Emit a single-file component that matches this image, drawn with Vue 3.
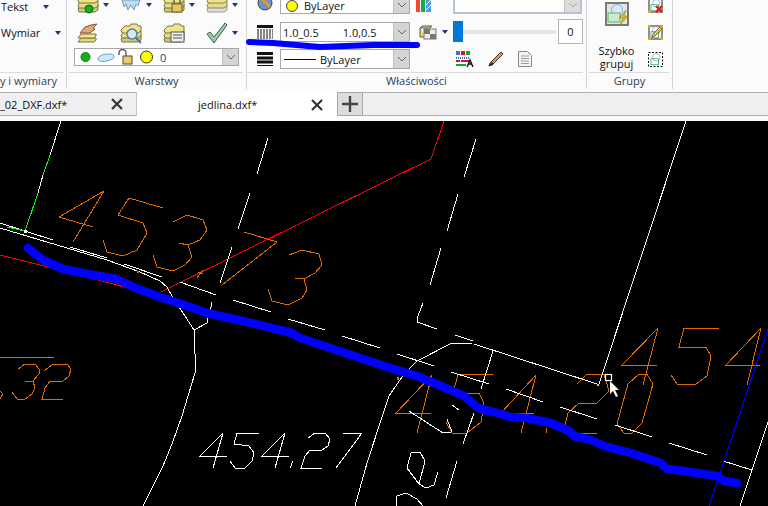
<script setup>
const white = [
  '61,121 50,155','43,175 38,193',
  '0,223 53,240','70,247 107,258','124,264 162,277','180,282 216,295','233,300 271,312',
  '288,319 325,330','342,336 380,348','397,354 434,366','451,372 489,384','506,389 543,402',
  '560,407 597,419','615,425 652,437','669,443 707,455','723,461 752,470',
  '0,228 67,248 107,260 140,272 160,281 167,287 173,298 185,316 194,330 195,354 195,373 182,416 172,444 163,466 143,506',
  '194,330 207,323 208,318','212,302 210,313',
  '268,138 257,174','250,193 238,229','232,247 220,283',
  '476,139 464,177','458,194 447,231','441,248 430,285','423,303 418,316 417,322 437,329',
  '455,335 473,341','474,344 597,384',
  '686,121 599,384',
  '472,343 452,343 417,361 404,374 389,396 384,411 367,463 355,506',
  '493,351 481,389','474,413 463,444','452,405 459,410',
  '409,411 443,433 451,432','447,419 452,432',
  '768,422 740,506',
  '223,433 200,456 227,456','223,433 213,468',
  '259,433 237,433 234,444 249,446 254,453 252,461 245,468 235,468 230,461',
  '285,433 262,456 289,456','285,433 275,468',
  '293,461 290,468',
  '308,438 315,433 325,433 330,439 328,446 322,450 310,450 305,456 301,468 322,468',
  '343,433 362,433 336,468',
  '411,453 420,452 425,461 419,484 407,468 411,453','419,484 426,488 434,485 438,472',
  '457,461 446,498',
  '396,506 397,496 406,493 417,499 423,506'
]
const green = ['50,155 43,175','38,193 25,231','7,227 25,231']
const red = [
  '0,255 60,270 147,293',
  '161,292 384,182 431,159 444,121'
]
const orange = [
  '104,191 59,217 93,227','104,191 73,242',
  '163,208 129,198 118,215 143,223 147,233 137,250 123,256 107,252 103,240',
  '173,222 187,215 203,220 207,230 200,240 188,245 179,243','188,245 192,257 185,265 173,271 157,267 153,255',
  '244,232 277,242 222,285','203,270 197,278','198,272 203,274',
  '289,255 302,250 319,254 322,265 315,273 304,279 295,278','304,279 307,290 302,298 288,305 272,301 268,289',
  '0,357 54,357',
  '18,369 25,364 35,364 39,369 39,374 33,381','25,381 33,381 35,388 32,394 25,399 17,399 12,392',
  '44,371 53,364 67,364 71,369 69,376 63,381 50,381 45,388 42,399 63,399',
  '0,391 3,394 0,399',
  '432,375 396,413 431,413','432,375 417,433',
  '493,374 458,374 453,393 479,393 484,403 481,422 467,433 452,433 446,422',
  '536,375 501,413 534,413','536,375 521,433','547,428 546,433',
  '577,384 587,374 604,374 609,391 597,403 579,403 568,413 564,429 564,433 597,433',
  '639,374 647,374 653,384 642,423 632,433 624,433 617,424 628,384 639,374',
  '658,328 622,365 657,365','658,328 643,385',
  '719,328 684,328 679,347 706,347 711,356 707,376 696,384 677,384 671,375',
  '761,328 726,365 760,365','761,328 747,385'
]
const scrawl = '28,248 43,260 63,269 93,275 117,279 133,287 160,297 193,308 207,313 247,322 292,333 300,338 384,366 417,376 441,386 464,396 477,407 484,410 494,412 511,417 527,418 551,423 569,431 574,436 591,440 604,446 631,453 661,463 667,469 684,471 717,476 724,481 737,483'
</script>

<template>
  <div class="page">
    <div class="ribbon">
      <svg class="defs" width="0" height="0">
        <defs>
          <symbol id="stack" viewBox="0 0 22 22">
            <path d="M1 17l4-4h16v5l-3 2H2z" fill="#cfc77a" stroke="#7a7440"/>
            <path d="M1 13l4-4h16v5l-3 2H2z" fill="#e3dc8e" stroke="#7a7440"/>
            <path d="M1 8l4-4h5l1-2h6l1 2h3v5l-3 2H2z" fill="#efe48a" stroke="#7a7440"/>
          </symbol>
          <symbol id="groupbox" viewBox="0 0 20 20">
            <circle cx="11" cy="7" r="5" fill="none" stroke="#7fa5dc"/>
            <rect x="4" y="9" width="10" height="8" fill="none" stroke="#2aa34a"/>
          </symbol>
        </defs>
      </svg>

      <section class="group g1">
        <div class="body col1">
          <div class="textrow"><span>Tekst</span><i class="tri"></i></div>
          <div class="textrow"><span>Wymiar</span><i class="tri"></i></div>
        </div>
        <div class="label clip"><span>sy i wymiary</span></div>
      </section>

      <section class="group g2">
        <div class="body">
          <div class="layers">
            <div class="cell">
              <svg class="ic" viewBox="0 0 22 22"><use href="#stack"/><circle cx="12" cy="17" r="4" fill="#16b01e" stroke="#0a6a10"/></svg><i class="tri"></i>
            </div>
            <div class="cell">
              <svg class="ic" viewBox="0 0 22 22"><path d="M2 8h18l-2 6-2-2-2 6-3-5-3 5-2-6-2 3z" fill="#bcdcf2" stroke="#7a9cb8"/></svg><i class="tri"></i>
            </div>
            <div class="cell">
              <svg class="ic" viewBox="0 0 22 22"><use href="#stack"/><rect x="9" y="12" width="10" height="8" fill="#e8c65c" stroke="#6a5a20"/><path d="M11 12V9a3 3 0 0 1 6 0v3" fill="none" stroke="#666" stroke-width="1.5"/></svg><i class="tri"></i>
            </div>
            <div class="cell">
              <svg class="ic" viewBox="0 0 22 22"><path d="M1 17l4-4h16v5l-3 2H2z" fill="#ddd" stroke="#999"/><path d="M1 13l4-4h16v5l-3 2H2z" fill="#e3dc8e" stroke="#8a8450"/><path d="M1 8l4-4h16v5l-3 2H2z" fill="#efe48a" stroke="#8a8450"/></svg><i class="tri"></i>
            </div>
            <div class="cell">
              <svg class="ic" viewBox="0 0 22 22"><path d="M1 20l3-4h15v2l-2 2z" fill="#e3d77e" stroke="#7a7440"/><path d="M1 16l3-4h15v2l-2 2z" fill="#efe48a" stroke="#7a7440"/><path d="M3 11l5-6 6-2 6-1-4 4 2 1-5 4H7z" fill="#dba884" stroke="#8a5030"/></svg>
            </div>
            <div class="cell">
              <svg class="ic" viewBox="0 0 22 22"><use href="#stack"/><circle cx="12" cy="12" r="5" fill="#d6e8f2" stroke="#5a7f9c" stroke-width="1.5"/><path d="M16 16l5 5" stroke="#3f78b0" stroke-width="2"/></svg>
            </div>
            <div class="cell">
              <svg class="ic" viewBox="0 0 22 22"><use href="#stack"/><rect x="8" y="10" width="13" height="10" fill="#eee" stroke="#555"/><path d="M10 13h9M10 16h9" stroke="#555"/></svg>
            </div>
            <div class="cell">
              <svg class="ic" viewBox="0 0 22 22"><path d="M1 12l3-2 4 5L19 1l2 2L8 21z" fill="#8fcfa0" stroke="#4a5a50"/></svg><i class="tri"></i>
            </div>
            <div class="layercombo">
              <svg class="lc-ic" width="85" height="16" viewBox="0 1 85 16">
                <circle cx="10.5" cy="9" r="4.5" fill="#12b018" stroke="#0a7a10"/>
                <path d="M23 10c2-3 6-4 12-4 3 0 4 1 4 3 0 2-3 3-8 4-5 1-9 0-8-3z" fill="#cfe6f7" stroke="#5ba3d8"/>
                <rect x="48" y="8" width="9" height="8" fill="#e8cc72" stroke="#5a4c20"/>
                <path d="M44 7V5a3 3 0 0 1 7 0v3" fill="none" stroke="#555" stroke-width="1.4"/>
                <circle cx="71.5" cy="9" r="6" fill="#ffff00" stroke="#333"/>
              </svg>
              <span class="zero">0</span>
              <span class="btn small"><svg width="10" height="6" viewBox="0 0 10 6"><path d="M1 1l4 4 4-4" fill="none" stroke="#666"/></svg></span>
            </div>
          </div>
        </div>
        <div class="label">Warstwy</div>
      </section>

      <section class="group g3">
        <div class="body bodyp">
          <div class="props">
            <div class="pi">
              <svg class="ic sm" viewBox="0 0 16 14"><circle cx="8" cy="5" r="7" fill="#6f90c8" stroke="#444"/><path d="M4 0l9 9" stroke="#d8a030" stroke-width="3"/></svg>
            </div>
            <div class="combo first"><span class="dot"></span><span class="t1">ByLayer</span><span class="btn"><svg width="10" height="6" viewBox="0 0 10 6"><path d="M1 1l4 4 4-4" fill="none" stroke="#666"/></svg></span></div>
            <div class="pc">
              <svg width="15" height="14" viewBox="0 0 15 14"><rect width="4" height="14" fill="#ee4a30"/><rect x="5" width="4" height="14" fill="#18a850"/><rect x="10" width="5" height="14" fill="#4d9ce8"/><path d="M10 12l5-5M10 7l5-5" stroke="#fff"/></svg>
            </div>
            <div class="combo first dis"><span class="btn dis"><svg width="10" height="6" viewBox="0 0 10 6"><path d="M1 1l4 4 4-4" fill="none" stroke="#aaa"/></svg></span></div>

            <div class="pi">
              <svg class="ic sm" viewBox="0 0 16 14"><rect width="16" height="3" fill="#111"/><path d="M0 5h16M0 7h16M0 9h16M0 11h16M0 13h16" stroke="#111" stroke-dasharray="2 1"/></svg>
            </div>
            <div class="combo low"><span class="t2">1.0_0.5</span><span class="t3">1.0,0.5</span><span class="btn"><svg width="10" height="6" viewBox="0 0 10 6"><path d="M1 1l4 4 4-4" fill="none" stroke="#666"/></svg></span></div>
            <div class="pc c2">
              <svg width="18" height="16" viewBox="0 0 18 16"><path d="M1 4h10l2-2H3zM1 4v9h6" fill="#f2e26a" stroke="#555"/><rect x="5" y="5" width="12" height="10" fill="#eee" stroke="#777"/><rect x="5" y="5" width="6" height="5" fill="#777"/><rect x="11" y="10" width="6" height="5" fill="#777"/></svg>
              <i class="tri"></i>
            </div>
            <div class="slider">
              <span class="thumb"></span><span class="track"></span>
              <span class="spin">0</span>
            </div>

            <div class="pi">
              <svg class="ic sm" viewBox="0 0 16 14"><path d="M0 1.5h16M0 6h16M0 10h16" stroke="#111" stroke-width="3"/><path d="M0 13.5h16" stroke="#111"/></svg>
            </div>
            <div class="combo"><span class="line"></span><span class="t1">ByLayer</span><span class="btn"><svg width="10" height="6" viewBox="0 0 10 6"><path d="M1 1l4 4 4-4" fill="none" stroke="#666"/></svg></span></div>
            <div></div>
            <div class="picons">
              <svg width="18" height="16" viewBox="0 0 18 16"><rect width="4" height="4" fill="#4a6ed0"/><rect x="5" width="4" height="4" fill="#d81818"/><rect x="10" width="4" height="4" fill="#18a040"/><path d="M0 7h13" stroke="#4a6ed0" stroke-dasharray="1 1" stroke-width="2"/><path d="M0 10h4" stroke="#d81818" stroke-width="2"/><path d="M5 10h8" stroke="#d81818" stroke-width="2"/><path d="M0 14h10" stroke="#18a040" stroke-width="2"/><path d="M11 16l3-7 3 7M12 13h4" fill="none" stroke="#111" stroke-width="1.4"/></svg>
              <svg width="16" height="16" viewBox="0 0 16 16"><path d="M1 15l3-1L15 3l-2-2L2 12z" fill="#e0a040" stroke="#333"/><path d="M1 15l3-4 2 2z" fill="#222"/></svg>
              <svg width="14" height="16" viewBox="0 0 14 16"><path d="M.5.5h9l4 4v11H.5z" fill="#f4f4f4" stroke="#888"/><path d="M3 5h8M3 7.5h8M3 10h8M3 12.5h8" stroke="#999"/></svg>
            </div>
          </div>
        </div>
        <div class="label">Właściwości</div>
      </section>

      <section class="group g4">
        <div class="body grupy">
          <div class="bigcol">
            <svg width="24" height="24" viewBox="0 0 24 24">
              <rect x="1" y="1" width="22" height="22" fill="#dfe6e8" stroke="#7a7a70" stroke-width="2"/>
              <circle cx="12" cy="8" r="5.5" fill="#dce8f8" stroke="#86aee0"/>
              <rect x="3" y="11" width="12" height="9" fill="#cfe8cf" stroke="#5cb56c"/>
              <path d="M21 8l-7 8h4l-3 7 8-9h-4z" fill="#d8b820" stroke="#8a7010" stroke-width=".5"/>
            </svg>
            <div class="bigtext">Szybko<br>grupuj</div>
          </div>
          <div class="smallcol">
            <svg width="15" height="15" viewBox="0 0 15 15"><rect x="1" y="1" width="13" height="13" fill="#fff" stroke="#222"/><use href="#groupbox" width="15" height="15"/><path d="M8 8l6 6M14 8l-6 6" stroke="#e01818" stroke-width="2.2"/><circle cx="1.5" cy="13.5" r="1.5" fill="#e0a818"/></svg>
            <svg width="15" height="15" viewBox="0 0 15 15"><rect x="1" y="1" width="13" height="13" fill="#fff" stroke="#222"/><use href="#groupbox" width="15" height="15"/><path d="M4 12l1-3 7-7 2 2-7 7z" fill="#e8c030" stroke="#444" stroke-width=".7"/><circle cx="1.5" cy="1.5" r="1.5" fill="#e0a818"/><circle cx="13.5" cy="1.5" r="1.5" fill="#e0a818"/><circle cx="1.5" cy="13.5" r="1.5" fill="#e0a818"/><circle cx="13.5" cy="13.5" r="1.5" fill="#e0a818"/></svg>
            <svg width="15" height="15" viewBox="0 0 15 15"><rect x=".5" y=".5" width="14" height="14" fill="#fff" stroke="#111" stroke-dasharray="2 1.5"/><use href="#groupbox" width="15" height="15"/></svg>
          </div>
        </div>
        <div class="label">Grupy</div>
      </section>

      <svg class="marker" width="430" height="60" viewBox="0 0 430 60">
        <polyline points="249,42 273,43 320,47 373,45 417,45" fill="none" stroke="#0000ff" stroke-width="6" stroke-linecap="round" stroke-linejoin="round"/>
      </svg>
    </div>

    <div class="tabs">
      <div class="tab off"><span class="tabname">_02_DXF.dxf*</span>
        <svg class="close" width="12" height="12" viewBox="0 0 12 12"><path d="M1 1l10 10M11 1L1 11" stroke="#333" stroke-width="2.2"/></svg>
      </div>
      <div class="tab on"><span class="tabname n2">jedlina.dxf*</span>
        <svg class="close c2x" width="12" height="12" viewBox="0 0 12 12"><path d="M1 1l10 10M11 1L1 11" stroke="#333" stroke-width="2.2"/></svg>
      </div>
      <div class="plus"><svg width="16" height="16" viewBox="0 0 16 16"><path d="M8 0v16M0 8h16" stroke="#444" stroke-width="2.4"/></svg></div>
      <div class="rest"></div>
    </div>

    <svg class="canvas" width="768" height="385" viewBox="0 121 768 385">
      <g fill="none" stroke-width="1" shape-rendering="crispEdges">
        <polyline v-for="(p, i) in red" :key="'r' + i" :points="p" stroke="#ff0000"/>
        <polyline v-for="(p, i) in orange" :key="'o' + i" :points="p" stroke="#e06c00"/>
        <polyline v-for="(p, i) in white" :key="'w' + i" :points="p" stroke="#ffffff"/>
        <polyline v-for="(p, i) in green" :key="'g' + i" :points="p" stroke="#00ff00"/>
        <polyline points="768,329 709,506" stroke="#0000ff"/>
      </g>
      <rect x="24" y="230" width="3" height="3" fill="#fff"/>
      <rect x="137" y="271" width="2" height="2" fill="#e06c00"/>
      <rect x="397" y="377" width="2" height="3" fill="#e06c00"/>
      <rect x="597" y="384" width="2" height="2" fill="#e8c090"/>
      <polyline :points="scrawl" fill="none" stroke="#0000ff" stroke-width="8.5" stroke-linecap="round" stroke-linejoin="round"/>
      <rect x="605.5" y="374.5" width="6" height="6" fill="#000" stroke="#fff" stroke-width="1.2"/>
      <path d="M610 381l0 13 3-3 3 6 2-1-3-6 4 0z" fill="#fff"/>
    </svg>
  </div>
</template>

<style>
html, body { margin: 0; background: #000; overflow: hidden; }
</style>

<style scoped>
.page { width: 768px; height: 506px; display: flex; flex-direction: column; overflow: hidden; font-family: "Open Sans", "Noto Sans", sans-serif; font-size: 11px; color: #111; }
.ribbon { position: relative; flex: none; height: 92px; box-sizing: border-box; padding-bottom: 3px; background: #fbfbfb; display: flex; overflow: hidden; }
.defs { position: absolute; }
.group { flex: none; box-sizing: border-box; border-right: 1px solid #d6d6d6; display: flex; flex-direction: column; height: 89px; }
.g1 { width: 67px; }
.g2 { width: 180px; }
.g3 { width: 340px; }
.g4 { width: 86px; }
.body { height: 73px; box-sizing: border-box; overflow: hidden; flex: none; border-bottom: 1px solid #dcdcdc; margin: 0 3px 0 2px; }
.label { height: 16px; line-height: 16px; text-align: center; color: #2e3d4e; white-space: nowrap; overflow: hidden; }
.clip { display: flex; justify-content: flex-end; padding-right: 9px; }
.clip span { flex: none; }
.g1 .body { margin-left: 0; }
.tri { flex: none; display: block; width: 0; height: 0; border-left: 3.5px solid transparent; border-right: 3.5px solid transparent; border-top: 4px solid #1d3a70; }

.col1 > .textrow { height: 27px; box-sizing: border-box; display: flex; align-items: center; padding-left: 1px; }
.col1 > .textrow:first-child { margin-top: -8px; padding-top: 2px; }
.textrow .tri { margin-left: 15px; }

.layers { display: grid; grid-template-columns: repeat(4, 43px); grid-template-rows: 26px 26px 18px; row-gap: 2px; padding-left: 8px; margin-top: -8px; }
.cell { display: flex; align-items: center; height: 26px; }
.cell:nth-child(-n+4) .ic { align-self: flex-start; }
.cell .tri { margin-left: 4px; }
.ic { width: 22px; height: 22px; flex: none; }
.ic.sm { width: 16px; height: 14px; }
.layercombo { grid-column: 1 / -1; margin: 0 10px 0 -3px; height: 18px; box-sizing: border-box; border: 1px solid #a8a8a8; background: #fff; display: flex; align-items: center; }
.lc-ic { flex: none; }
.zero { color: #123a8a; }
.btn { margin-left: auto; flex: none; width: 16px; height: 100%; background: #d4d4d4; display: flex; align-items: center; justify-content: center; border-left: 1px solid #c0c0c0; box-sizing: border-box; }
.btn.dis { background: #dcdcdc; }

.bodyp { margin: 0 3px 0 0; }
.props { display: grid; grid-template-columns: 33px 130px 43px 130px; grid-template-rows: 19px 21px 20px; row-gap: 7px; margin-top: -5px; align-items: center; }
.pi { display: flex; justify-content: center; padding-left: 3px; }
.pc { display: flex; align-items: center; padding-left: 6px; }
.pc.c2 { padding-left: 9px; gap: 5px; }
.combo { height: 20px; box-sizing: border-box; border: 1px solid #a8a8a8; background: #fff; display: flex; align-items: center; }
.combo.first { height: 19px; }
.first .t1, .first .dot { margin-top: 2px; }
.combo.low { align-self: end; }
.combo.dis { background: #fdfdfd; border: 2px solid #b8c4d0; width: 129px; }
.dot { width: 10px; height: 10px; border-radius: 50%; background: #ffff00; border: 1px solid #444; margin-left: 5px; }
.t1 { margin-left: 6px; }
.t2 { margin-left: 2px; }
.t3 { margin-left: 24px; }
.line { width: 32px; height: 1px; background: #111; margin-left: 3px; }
.line + .t1 { margin-left: 4px; }
.slider { display: flex; align-items: center; height: 25px; }
.thumb { width: 10px; height: 21px; background: #0078d7; flex: none; }
.track { width: 93px; height: 4px; background: #e2e6e2; flex: none; }
.spin { flex: none; width: 25px; height: 25px; box-sizing: border-box; margin-left: 2px; border: 1px solid #b4b4b4; background: #fff; display: flex; align-items: center; justify-content: center; }
.picons { display: flex; align-items: center; gap: 14px; padding-left: 3px; }

.grupy { display: flex; margin-right: 3px; }
.bigcol { width: 55px; display: flex; flex-direction: column; align-items: center; padding-top: 2px; }
.bigtext { margin-top: 18px; text-align: center; line-height: 13px; }
.smallcol { width: 20px; margin-left: 1px; display: flex; flex-direction: column; align-items: center; gap: 12px; margin-top: -2px; }

.marker { position: absolute; left: 0; top: 0; pointer-events: none; }

.tabs { flex: none; height: 29px; display: flex; align-items: flex-start; background: #fafafa; }
.tab { flex: none; box-sizing: border-box; display: flex; align-items: center; }
.off { width: 137px; height: 24px; background: #efeff1; border-top: 1px solid #b0b0b0; border-bottom: 1px solid #b0b0b0; border-right: 1px solid #c4c4c4; }
.on { width: 200px; height: 29px; background: #fff; align-items: flex-start; padding-top: 4px; }
.tabname { line-height: 17px; }
.n2 { margin-left: 61px; }
.close { flex: none; margin-left: auto; margin-right: 13px; }
.c2x { margin-right: 14px; margin-top: 3px; }
.plus { flex: none; width: 26px; height: 24px; box-sizing: border-box; background: #dcdcdc; border: 1px solid #aaa; display: flex; align-items: center; justify-content: center; }
.rest { flex: 1; height: 24px; box-sizing: border-box; background: #efeff1; border-top: 1px solid #b0b0b0; border-bottom: 1px solid #b0b0b0; }
.canvas { display: block; flex: none; background: #000; }
</style>
